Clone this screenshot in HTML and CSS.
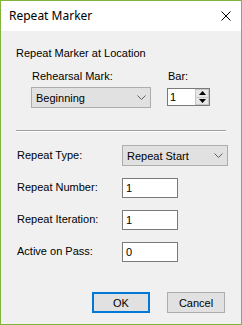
FILE: index.html
```html
<!DOCTYPE html>
<html>
<head>
<meta charset="utf-8">
<link rel="stylesheet" href="styles.css">
</head>
<body>
<div class="window">
  <div class="titlebar">
    <span class="title">Repeat Marker</span>
    <svg class="close" width="10" height="10" viewBox="0 0 10 10"><path d="M0.5 0.5L9.5 9.5M9.5 0.5L0.5 9.5" stroke="#000" stroke-width="1" fill="none"/></svg>
  </div>
  <div class="content">
    <div class="heading">Repeat Marker at Location</div>
    <div class="loc-row">
      <div class="col col-mark">
        <div class="label">Rehearsal Mark:</div>
        <div class="combo combo-mark"><span>Beginning</span>
          <svg class="chev" width="9" height="5" viewBox="0 0 9 5"><path d="M0.5 0.5L4.5 4.5L8.5 0.5" stroke="#606060" fill="none"/></svg>
        </div>
      </div>
      <div class="col col-bar">
        <div class="label">Bar:</div>
        <div class="spin">
          <span class="spin-text">1</span>
          <div class="spin-btns">
            <div class="spin-btn"><svg width="7" height="4" viewBox="0 0 7 4"><path d="M3.5 0L7 4H0Z" fill="#000"/></svg></div>
            <div class="spin-btn"><svg width="7" height="4" viewBox="0 0 7 4"><path d="M0 0H7L3.5 4Z" fill="#000"/></svg></div>
          </div>
        </div>
      </div>
    </div>
    <div class="sep"></div>
    <div class="form">
      <div class="label row-label">Repeat Type:</div>
      <div class="combo combo-type"><span>Repeat Start</span>
        <svg class="chev" width="9" height="5" viewBox="0 0 9 5"><path d="M0.5 0.5L4.5 4.5L8.5 0.5" stroke="#606060" fill="none"/></svg>
      </div>
      <div class="label row-label">Repeat Number:</div>
      <div class="edit">1</div>
      <div class="label row-label">Repeat Iteration:</div>
      <div class="edit">1</div>
      <div class="label row-label">Active on Pass:</div>
      <div class="edit">0</div>
    </div>
    <div class="buttons">
      <div class="btn btn-default">OK</div>
      <div class="btn">Cancel</div>
    </div>
  </div>
</div>
</body>
</html>
```
FILE: styles.css
```css
html, body {
  margin: 0;
  padding: 0;
}
body {
  width: 242px;
  height: 325px;
  overflow: hidden;
  font-family: "Liberation Sans", Arial, sans-serif;
  font-size: 11px;
  color: #000;
}
.window {
  box-sizing: border-box;
  width: 242px;
  height: 325px;
  border: 1px solid #82b43c;
  display: flex;
  flex-direction: column;
  background: #f0f0f0;
}
.titlebar {
  height: 30px;
  background: #fff;
  display: flex;
  align-items: center;
  justify-content: space-between;
  padding: 0 10px 0 8px;
  flex-shrink: 0;
}
.title {
  font-family: "Noto Sans", "Open Sans", sans-serif;
  font-size: 12px;
  line-height: 16px;
}
.close {
  display: block;
}
.content {
  flex: 1;
  padding: 16px 16px 0 15px;
  display: flex;
  flex-direction: column;
}
.label, .heading {
  line-height: 13px;
  white-space: nowrap;
}
.loc-row {
  display: flex;
  gap: 16px;
  margin-top: 10px;
  padding-left: 15px;
}
.col {
  display: flex;
  flex-direction: column;
  gap: 4px;
}
.col-bar .label {
  padding-left: 1px;
}
.col-mark .label {
  padding-left: 1px;
}
.combo {
  box-sizing: border-box;
  height: 21px;
  background: #e1e1e1;
  border: 1px solid #adadad;
  display: flex;
  align-items: center;
  justify-content: space-between;
  padding: 0 4px 0 4px;
}
.combo-mark {
  width: 120px;
}
.combo-type {
  width: 106px;
}
.chev {
  display: block;
}
.spin {
  box-sizing: border-box;
  margin-top: 1px;
  width: 43px;
  height: 18px;
  border: 1px solid #7a7a7a;
  background: #fff;
  display: flex;
}
.spin-text {
  flex: 1;
  padding-left: 2px;
  line-height: 16px;
}
.spin-btns {
  width: 14px;
  display: flex;
  flex-direction: column;
  background: #fff;
  padding: 0 0 0 0;
}
.spin-btn {
  flex: 1;
  display: flex;
  align-items: center;
  justify-content: center;
  background: #e6e6e6;
  border: 1px solid #c8c8c8;
}
.spin-btn + .spin-btn {
  border-top: none;
}
.spin-btn svg {
  display: block;
}
.sep {
  margin-top: 22px;
  height: 1px;
  width: 210px;
  background: #a0a0a0;
  border-bottom: 1px solid #fff;
}
.form {
  margin-top: 13px;
  display: grid;
  grid-template-columns: 106px auto;
  grid-auto-rows: 21px;
  row-gap: 11px;
  align-items: center;
}
.row-label {
  padding-left: 1px;
}
.edit {
  box-sizing: border-box;
  width: 56px;
  height: 20px;
  background: #fff;
  border: 1px solid #7a7a7a;
  padding-left: 3px;
  line-height: 18px;
}
.buttons {
  margin-top: 30px;
  display: flex;
  justify-content: flex-end;
  gap: 17px;
}
.btn {
  box-sizing: border-box;
  width: 58px;
  height: 21px;
  background: #e1e1e1;
  border: 1px solid #adadad;
  display: flex;
  align-items: center;
  justify-content: center;
}
.btn-default {
  border: 2px solid #0078d7;
}
```
